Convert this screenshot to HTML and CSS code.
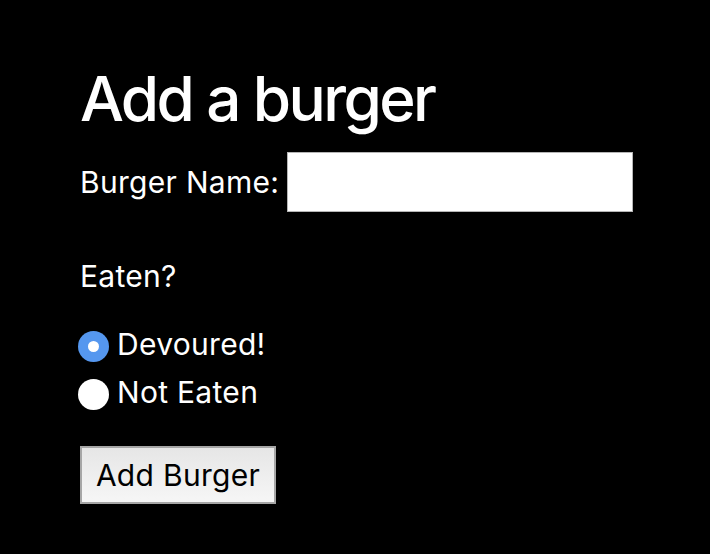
FILE: index.html
```html
<!DOCTYPE html>
<html>
<head>
<meta charset="utf-8">
<link rel="stylesheet" href="styles.css">
</head>
<body>
<main class="page">
  <h1 class="title">Add a burger</h1>
  <form class="form">
    <div class="name-row">
      <label class="label" for="name">Burger Name:</label>
      <input class="text-input" id="name" type="text">
    </div>
    <p class="question">Eaten?</p>
    <div class="options">
      <label class="option"><input class="radio" type="radio" name="eaten" checked><span>Devoured!</span></label>
      <label class="option"><input class="radio" type="radio" name="eaten"><span>Not Eaten</span></label>
    </div>
    <button class="btn" type="button">Add Burger</button>
  </form>
</main>
</body>
</html>
```
FILE: styles.css
```css
html, body {
  margin: 0;
  background: #000;
  color: #fff;
  font-family: Inter, "Noto Sans", sans-serif;
}
.page {
  padding: 62px 0 0 80px;
}
.title {
  margin: 0;
  font-size: 62px;
  font-weight: 500;
  line-height: 74px;
  letter-spacing: -2.6px;
}
.form {
  display: flex;
  flex-direction: column;
  align-items: flex-start;
}
.name-row {
  display: flex;
  align-items: center;
  gap: 8px;
  margin-top: 16px;
}
.label {
  font-size: 30px;
  letter-spacing: 0.3px;
}
.text-input {
  box-sizing: border-box;
  margin: 0;
  border: 1px solid #b5b5b5;
  background: #fff;
  width: 346px;
  height: 60px;
}
.question {
  margin: 46px 0 0;
  font-size: 30px;
  letter-spacing: 0.3px;
  line-height: 36px;
}
.options {
  display: flex;
  flex-direction: column;
  margin-top: 26px;
}
.option {
  display: flex;
  align-items: center;
  gap: 8px;
  font-size: 30px;
  letter-spacing: 0.3px;
  height: 48px;
}
.radio {
  appearance: none;
  -webkit-appearance: none;
  margin: 0 0 0 -2px;
  width: 31px;
  height: 31px;
  border-radius: 50%;
  background: #fff;
  display: grid;
  place-items: center;
  position: relative;
  top: 2px;
}
.radio:checked {
  background: #5597ef;
}
.radio:checked::after {
  content: "";
  width: 11px;
  height: 11px;
  border-radius: 50%;
  background: #fff;
}
.btn {
  margin-top: 30px;
  width: 196px;
  height: 58px;
  border: 2px solid #a6a6a6;
  background: linear-gradient(#e6e6e6, #f6f6f6);
  color: #000;
  font-family: Inter, "Noto Sans", sans-serif;
  font-size: 30px;
  letter-spacing: 0.3px;
  padding: 0;
}
```
